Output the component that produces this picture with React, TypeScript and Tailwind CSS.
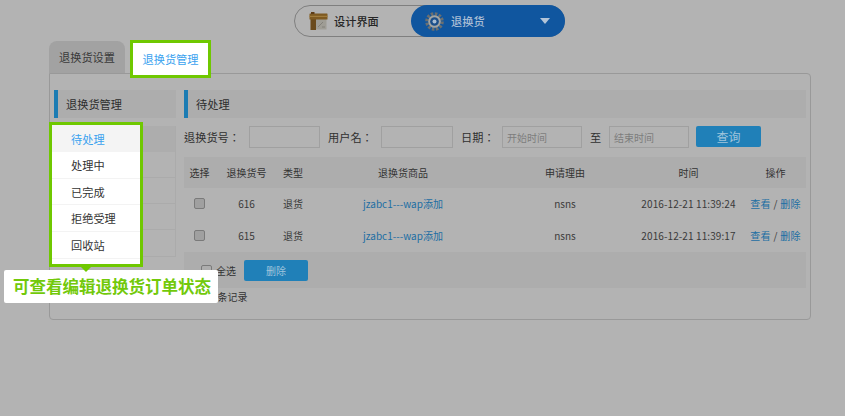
import React from "react";

const font = { fontFamily: '"Noto Sans CJK SC", "Noto Sans", sans-serif' };

function Gear() {
  return (
    <svg width="19" height="19" viewBox="0 0 20 20">
      <circle cx="10" cy="10" r="8" fill="none" stroke="#6b6f70" strokeWidth="3.6" strokeDasharray="2.6 1.6" />
      <circle cx="10" cy="10" r="6.6" fill="#a3a5a3" />
      <circle cx="10" cy="10" r="4.6" fill="#1c4f8a" />
      <circle cx="10" cy="10" r="2.1" fill="#a9bdd2" />
    </svg>
  );
}

function Board() {
  return (
    <svg width="19" height="19" viewBox="0 0 19 19">
      <rect x="6" y="7" width="11.5" height="10.5" fill="#9f9d95" />
      <path d="M9 15l5-5M13 15h3" stroke="#83817a" strokeWidth="1" />
      <rect x="1.5" y="7" width="5.5" height="11" fill="#6a4a1c" />
      <rect x="0.5" y="1.5" width="18" height="6" rx="0.5" fill="#7e5a22" />
      <rect x="0.5" y="3.8" width="18" height="1.2" fill="#a17c3c" />
      <rect x="2" y="0" width="3.5" height="2" fill="#5e3d17" />
    </svg>
  );
}

const rows = [
  { id: "616", time: "2016-12-21 11:39:24" },
  { id: "615", time: "2016-12-21 11:39:17" },
];

const menu = ["处理中", "已完成", "拒绝受理", "回收站"];

function Cols({ a, b, c, d, e, f, g }: { a: React.ReactNode; b: React.ReactNode; c: React.ReactNode; d: React.ReactNode; e: React.ReactNode; f: React.ReactNode; g: React.ReactNode }) {
  return (
    <>
      <div className="w-[31px] shrink-0 flex justify-center">{a}</div>
      <div className="w-[63px] shrink-0 text-center">{b}</div>
      <div className="w-[30px] shrink-0 text-center">{c}</div>
      <div className="w-[190px] shrink-0 text-center">{d}</div>
      <div className="w-[134px] shrink-0 text-center">{e}</div>
      <div className="w-[113px] shrink-0 text-center tracking-[0.1px]">{f}</div>
      <div className="w-[61px] shrink-0 text-center">{g}</div>
    </>
  );
}

const colon = "font-['Noto_Sans_CJK_TC']";

export default function App() {
  return (
    <div style={font} className="relative w-[845px] h-[416px] overflow-hidden bg-[#b3b3b3] text-[11.2px] text-[#333333]">
      <div className="flex pt-[5px] pl-[294px]">
        <div className="flex h-[32px] w-[271px] rounded-full border border-[#7f7f7f]">
          <div className="flex items-center w-[116px] pl-[14px] gap-[6px] text-[#262626] font-medium">
            <Board />
            <span>设计界面</span>
          </div>
          <div className="flex items-center flex-1 -my-px -mr-px rounded-full bg-[#10569f] pl-[14px] pr-[15px] gap-[7px] text-[#a9bdd4] font-medium">
            <Gear />
            <span>退换货</span>
            <span className="ml-auto w-0 h-0 border-x-[5px] border-x-transparent border-t-[6px] border-t-[#b3c4d8]" />
          </div>
        </div>
      </div>

      <div className="mt-[4px] ml-[49px] w-[762px]">
        <div className="flex items-end h-[32px]">
          <div className="flex items-center justify-center w-[76px] h-[32px] rounded-t-[8px] bg-[#a2a2a2] text-[#3a3a3a]">退换货设置</div>
        </div>
        <div className="h-[247px] rounded-b-[4px] rounded-tr-[4px] border border-[#999999] flex pt-[16px] pl-[4px] pr-[4px] gap-[8px]">
          <div className="w-[122px] shrink-0">
            <div className="flex items-center h-[28px] bg-[#adadad] border-l-[4px] border-l-[#1c7cb3] pl-[8px] text-[#2e2e2e]">退换货管理</div>
            <div className="mt-[8px] flex flex-col border border-[#ababab] border-t-0 h-[131px]">
              <div className="h-[26px] bg-[#adadad]" />
              <div className="h-[26px] border-b border-[#ababab]" />
              <div className="h-[26px] border-b border-[#ababab]" />
              <div className="h-[26px] border-b border-[#ababab]" />
            </div>
          </div>
          <div className="w-[622px] shrink-0">
            <div className="flex items-center h-[28px] bg-[#adadad] border-l-[4px] border-l-[#1c7cb3] pl-[8px] text-[#2e2e2e]">待处理</div>
            <div className="flex items-start h-[22px] mt-[8px] text-[#303030]">
              <span className={`w-[65px] leading-[22px] ${colon}`}>退换货号：</span>
              <div className="w-[71px] h-[22px] border border-[#a0a0a0]" />
              <span className={`ml-[8px] w-[53px] leading-[22px] ${colon}`}>用户名：</span>
              <div className="w-[72px] h-[22px] border border-[#a0a0a0]" />
              <span className={`ml-[8px] w-[41px] leading-[22px] ${colon}`}>日期：</span>
              <div className="w-[80px] h-[22px] border border-[#a0a0a0] flex items-center pl-[4px] text-[10px] text-[#7d7d7d]">开始时间</div>
              <span className="ml-[8px] w-[19px] leading-[22px]">至</span>
              <div className="w-[80px] h-[22px] border border-[#a0a0a0] flex items-center pl-[4px] text-[10px] text-[#7d7d7d]">结束时间</div>
              <div className="ml-[7px] flex items-center justify-center w-[65px] h-[21px] rounded-[2px] bg-[#2080b8] text-[12px] text-[#9fc4dc]">查询</div>
            </div>
            <div className="flex items-center h-[31px] mt-[9px] bg-[#adadad] text-[10px] text-[#333333]">
              <Cols a="选择" b="退换货号" c="类型" d="退换货商品" e="申请理由" f="时间" g="操作" />
            </div>
            {rows.map((r) => (
              <div key={r.id} className="flex items-center h-[32px] pb-[1px] text-[10px] text-[#3a3a3a]">
                <Cols
                  a={<span className="w-[11px] h-[11px] rounded-[2px] border border-[#7a7a7a] bg-[#a0a0a0]" />}
                  b={r.id}
                  c="退货"
                  d={<span className="text-[#1c6ea3]">jzabc1---wap添加</span>}
                  e="nsns"
                  f={r.time}
                  g={<span className="whitespace-nowrap tracking-[0.3px]"><span className="text-[#1c6ea3]">查看</span> / <span className="text-[#1c6ea3]">删除</span></span>}
                />
              </div>
            ))}
            <div className="flex items-center h-[36px] bg-[#adadad] pl-[17px] text-[10px]">
              <span className="w-[11px] h-[11px] rounded-[2px] border border-[#7a7a7a]" />
              <span className="ml-[4px]">全选</span>
              <div className="ml-[8px] flex items-center justify-center w-[64px] h-[21px] rounded-[2px] bg-[#2080b8] text-[#9fc4dc]">删除</div>
            </div>
            <div className="mt-[1px] pl-[28px] text-[10px] leading-[16px]">2条记录</div>
          </div>
        </div>
      </div>

      {/* Highlight: active tab */}
      <div className="absolute left-[130px] top-[40px] w-[81px] h-[38px] border-[3px] border-[#6fc800] bg-white flex items-center justify-center text-[#3aa2ef]">退换货管理</div>

      {/* Highlight: status menu */}
      <div className="absolute left-[49px] top-[122px] w-[94px] h-[145px] border-[3px] border-[#6fc800] bg-white flex flex-col">
        <div className="h-[26.8px] shrink-0 bg-[#f4f4f4] pl-[19px] pt-[1px] flex items-center text-[#3aa2ef]">待处理</div>
        {menu.map((m) => (
          <div key={m} className="h-[26.8px] shrink-0 pl-[19px] pt-[1px] flex items-center border-b border-[#f3f3f3] text-[#333333]">{m}</div>
        ))}
      </div>

      {/* Callout */}
      <div className="absolute left-[4px] top-[270px] w-[214px] h-[33px] rounded-[2px] bg-white flex items-center justify-center pl-[2px] text-[16.5px] font-bold text-[#72c90a] whitespace-nowrap">可查看编辑退换货订单状态</div>
      <div className="absolute left-[80px] top-[266px] w-0 h-0 border-x-[6.5px] border-x-transparent border-t-[6px] border-t-[#6fc800]" />
    </div>
  );
}
